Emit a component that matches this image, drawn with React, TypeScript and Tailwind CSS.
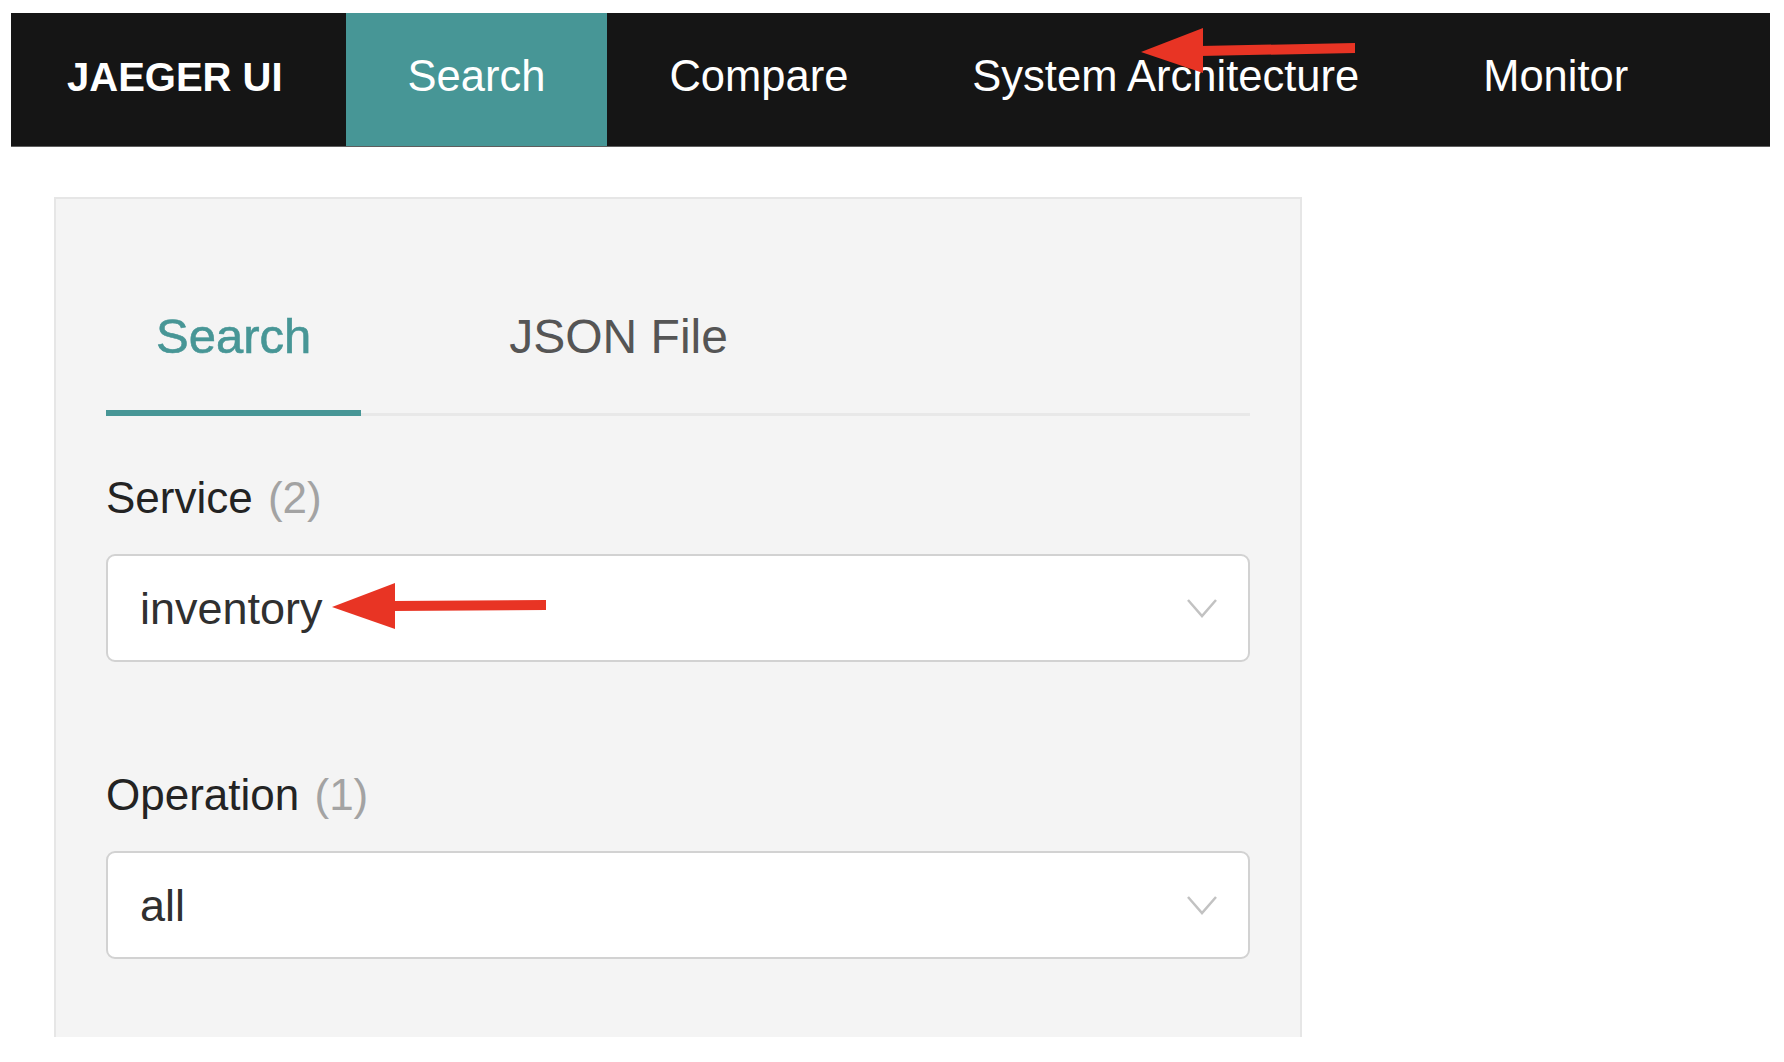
const navItems = ["Search", "Compare", "System Architecture", "Monitor"]

function Chevron() {
  return (
    <svg width="32" height="22" viewBox="0 0 32 22" fill="none" className="shrink-0">
      <path d="M2 3 L16 19 L30 3" stroke="#c2c2c2" strokeWidth="2.5" />
    </svg>
  )
}

function SelectBox({ value }: { value: string }) {
  return (
    <div className="flex h-[108px] items-center justify-between rounded-[9px] border-2 border-[#d2d2d2] bg-white pl-[32px] pr-[30px]">
      <span className="text-[45px] leading-[45px] text-[#303030]">{value}</span>
      <Chevron />
    </div>
  )
}

function Field({ label, count, value }: { label: string; count: number; value: string }) {
  return (
    <div className="flex flex-col gap-[34px]">
      <div className="text-[44px] leading-[44px] text-[#232323]">
        {label} <span className="ml-[3px] text-[#a3a3a3]">({count})</span>
      </div>
      <SelectBox value={value} />
    </div>
  )
}

// red annotation arrows drawn over the screenshot
function Arrows() {
  return (
    <svg className="pointer-events-none absolute left-0 top-0" width="1784" height="1062">
      <polygon points="1141,52 1203,28 1203,73" fill="#e83424" />
      <polygon points="1200,46 1355,43 1355,53 1200,56" fill="#e83424" />
      <polygon points="332,607 395,583 395,629" fill="#e83424" />
      <polygon points="392,601 546,600 546,610 392,611" fill="#e83424" />
    </svg>
  )
}

export default function App() {
  return (
    <div className="relative min-h-[1062px] bg-white pt-[13px] font-['Liberation_Sans',Arial,sans-serif]">
      <nav className="ml-[11px] mr-[14px] flex h-[134px] items-stretch border-b border-[#5e5e5e] bg-[#151515] text-white">
        <div className="flex items-center pb-[5px] pl-[56px] pr-[63px] text-[40px] font-bold leading-none">JAEGER UI</div>
        {navItems.map((item, i) => (
          <div
            key={item}
            className={`flex items-center px-[62px] pb-[5px] text-[43.5px] leading-none ${i === 0 ? "bg-[#479696]" : ""}`}
          >
            {item}
          </div>
        ))}
      </nav>

      <div className="ml-[54px] mt-[50px] h-[840px] w-[1248px] border-x-2 border-t-2 border-[#e6e6e6] bg-[#f4f4f4] px-[50px]">
        <div className="flex gap-[98px] border-b-[3px] border-[#e8e8e8] pt-[113px]">
          <div className="relative px-[50px] pb-[52px] text-[49px] leading-[49px] text-[#479696] [-webkit-text-stroke:0.6px_#479696]">
            Search
            <span className="absolute -bottom-[3px] left-0 h-[6px] w-full bg-[#479696]" />
          </div>
          <div className="px-[50px] pb-[52px] text-[48px] leading-[49px] text-[#555555]">JSON File</div>
        </div>

        <div className="mt-[60px] flex flex-col gap-[111px]">
          <Field label="Service" count={2} value="inventory" />
          <Field label="Operation" count={1} value="all" />
        </div>
      </div>

      <Arrows />
    </div>
  )
}
